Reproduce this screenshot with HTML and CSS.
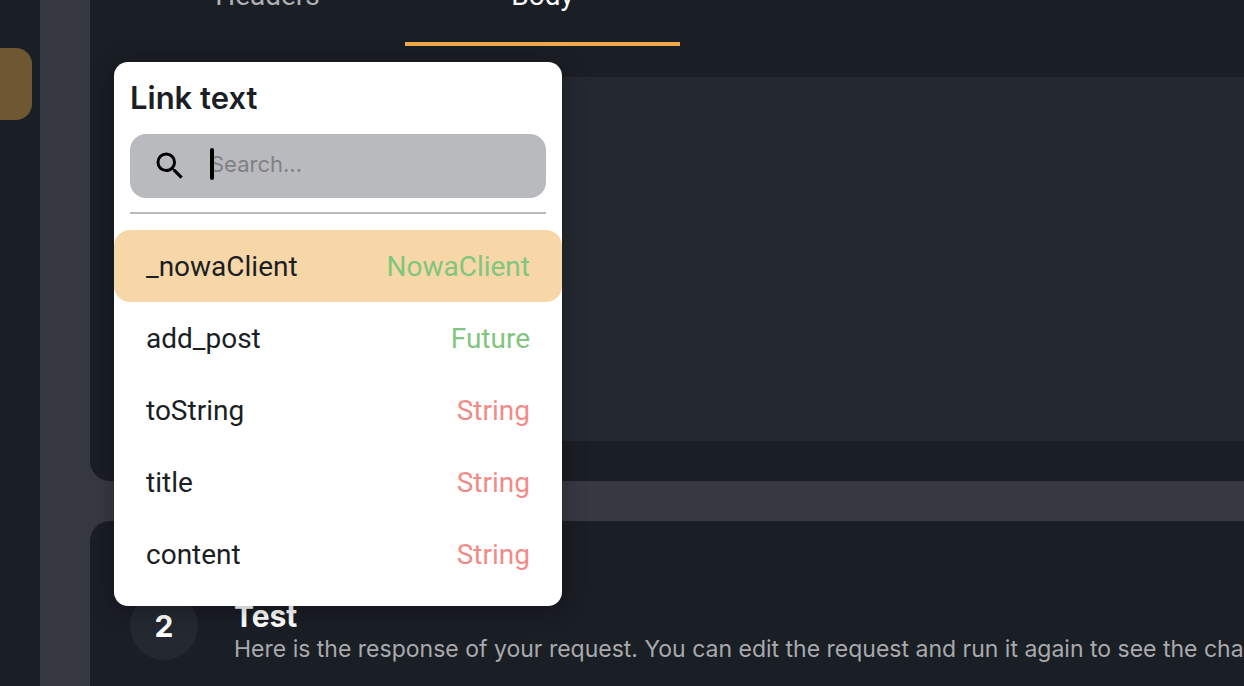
FILE: index.html
```html
<!DOCTYPE html>
<html lang="en">
<head>
<meta charset="utf-8">
<title>Request editor</title>
<link rel="stylesheet" href="styles.css">
</head>
<body>
<div class="app">
  <nav class="sidebar" aria-label="Sections">
    <button class="sidebar-item" type="button" aria-label="Current section"></button>
  </nav>
  <main class="content">
    <section class="panel request">
      <div class="tabs" role="tablist">
        <button class="tab" type="button" role="tab" aria-selected="false">Headers</button>
        <button class="tab active" type="button" role="tab" aria-selected="true">Body</button>
      </div>
      <div class="editor"></div>
      <div class="popover" role="dialog" aria-labelledby="link-title">
        <div class="popover-head">
          <h2 class="popover-title" id="link-title">Link text</h2>
          <label class="search">
            <svg class="search-icon" viewBox="0 0 24 24" aria-hidden="true"><path fill="currentColor" d="M15.5 14h-.79l-.28-.27A6.47 6.47 0 0 0 16 9.5 6.5 6.5 0 1 0 9.5 16c1.61 0 3.09-.59 4.23-1.57l.27.28v.79l5 4.99L20.49 19l-4.99-5zm-6 0C7.01 14 5 11.99 5 9.5S7.01 5 9.5 5 14 7.01 14 9.5 11.99 14 9.5 14z"/></svg>
            <span class="field">
              <input class="search-input" type="text" placeholder="Search..." aria-label="Search">
              <span class="caret"></span>
            </span>
          </label>
          <hr class="divider">
        </div>
        <div class="options">
          <button class="option selected" type="button"><span>_nowaClient</span><span class="object">NowaClient</span></button>
          <button class="option" type="button"><span>add_post</span><span class="object">Future</span></button>
          <button class="option" type="button"><span>toString</span><span class="string">String</span></button>
          <button class="option" type="button"><span>title</span><span class="string">String</span></button>
          <button class="option" type="button"><span>content</span><span class="string">String</span></button>
        </div>
      </div>
    </section>
    <section class="panel test">
      <span class="step">2</span>
      <div class="step-text">
        <h2 class="step-title">Test</h2>
        <p class="step-note">Here is the response of your request. You can edit the request and run it again to see the changes.</p>
      </div>
    </section>
  </main>
</div>
</body>
</html>
```

FILE: styles.css
```css
* {
  box-sizing: border-box;
}

body {
  margin: 0;
  font-family: Roboto, sans-serif;
  background: #373942;
}

button {
  border: 0;
  background: none;
  font: inherit;
  cursor: pointer;
}

h2,
p {
  margin: 0;
}

.app {
  display: flex;
  height: 100vh;
  overflow: hidden;
}

.sidebar {
  flex: 0 0 40px;
  padding: 48px 8px 0 0;
  background: #1a1e25;
}

.sidebar-item {
  display: block;
  width: 100%;
  height: 72px;
  border-radius: 0 16px 16px 0;
  background: #705734;
}

.content {
  flex: 1;
  min-width: 0;
  display: flex;
  flex-direction: column;
  gap: 40px;
  padding-left: 50px;
}

.panel {
  background: #1a1e25;
}

.request {
  position: relative;
  padding: 0 0 40px 40px;
  border-radius: 0 0 0 20px;
}

.tabs {
  display: flex;
  margin-top: -50px;
}

.tab {
  width: 275px;
  height: 96px;
  padding: 0;
  border-bottom: 4px solid transparent;
  font-size: 28px;
  line-height: 32px;
  color: #b0b1b4;
}

.tab.active {
  border-color: #f0a94e;
  color: #fff;
}

.editor {
  height: 364px;
  margin-top: 31px;
  background: #242830;
}

.popover {
  position: absolute;
  top: 62px;
  left: 24px;
  z-index: 1;
  width: 448px;
  padding: 16px 0;
  border-radius: 14px;
  background: #fff;
  color: #1a1e25;
  box-shadow: 0 4px 24px rgba(0, 0, 0, 0.3);
}

.popover-head {
  padding: 0 16px;
}

.popover-title {
  font: 600 31px/40px Inter, sans-serif;
}

.search {
  display: flex;
  align-items: center;
  gap: 22px;
  height: 64px;
  margin: 16px 0 14px;
  padding: 0 22px;
  border-radius: 16px;
  background: #b9babe;
}

.search-icon {
  width: 36px;
  height: 36px;
  color: #000;
}

.field {
  position: relative;
  flex: 1;
  padding-bottom: 4px;
}

.search-input {
  display: block;
  width: 100%;
  height: 32px;
  padding: 0;
  border: 0;
  outline: 0;
  background: none;
  font: 22px Inter, sans-serif;
  color: #000;
}

.search-input::placeholder {
  color: #7f8085;
  opacity: 1;
}

.caret {
  position: absolute;
  top: 0;
  left: 0;
  width: 4px;
  height: 32px;
  border-radius: 2px;
  background: #000;
}

.divider {
  height: 2px;
  margin: 0 0 16px;
  border: 0;
  background: #b9babe;
}

.option {
  display: flex;
  justify-content: space-between;
  align-items: center;
  width: 100%;
  height: 72px;
  padding: 0 32px;
  border-radius: 16px;
  font-size: 28px;
  color: #1a1e25;
}

.option.selected {
  background: #f7d7a7;
}

.object {
  color: #81c67e;
}

.string {
  color: #f28b88;
}

.test {
  flex: 1;
  display: flex;
  align-items: flex-start;
  gap: 36px;
  padding: 71px 0 0 40px;
  border-radius: 20px 0 0 0;
  overflow: hidden;
}

.step {
  flex: 0 0 68px;
  height: 68px;
  border-radius: 50%;
  background: #242830;
  font: 700 30px/68px Inter, sans-serif;
  text-align: center;
  color: #fff;
}

.step-title {
  font: 700 30px/36px Inter, sans-serif;
  color: #fff;
}

.step-text {
  padding-top: 6px;
}

.step-note {
  font: 23px/30px Inter, sans-serif;
  color: #a9aaad;
  white-space: nowrap;
}
```
